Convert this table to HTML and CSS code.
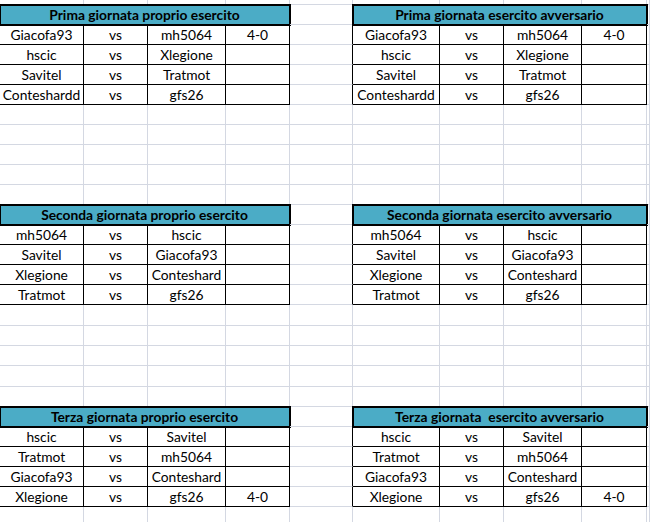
FILE: index.html
```html
<!DOCTYPE html>
<html lang="it">
<head>
<meta charset="utf-8">
<title>Giornate</title>
<link rel="stylesheet" href="styles.css">
</head>
<body>
<div class="sheet">
  <!-- row 0 -->
  <div></div><div></div><div></div><div></div><div></div><div></div><div></div><div></div><div></div><div></div>

  <!-- Prima giornata -->
  <div class="h">Prima giornata proprio esercito</div><div class="e"></div><div class="h">Prima giornata esercito avversario</div><div></div>
  <div class="t">Giacofa93</div><div class="t">vs</div><div class="t">mh5064</div><div class="t">4-0</div><div class="e"></div><div class="t">Giacofa93</div><div class="t">vs</div><div class="t">mh5064</div><div class="t">4-0</div><div></div>
  <div class="t">hscic</div><div class="t">vs</div><div class="t">Xlegione</div><div class="t"></div><div class="e"></div><div class="t">hscic</div><div class="t">vs</div><div class="t">Xlegione</div><div class="t"></div><div></div>
  <div class="t">Savitel</div><div class="t">vs</div><div class="t">Tratmot</div><div class="t"></div><div class="e"></div><div class="t">Savitel</div><div class="t">vs</div><div class="t">Tratmot</div><div class="t"></div><div></div>
  <div class="t">Conteshardd</div><div class="t">vs</div><div class="t">gfs26</div><div class="t"></div><div class="e"></div><div class="t">Conteshardd</div><div class="t">vs</div><div class="t">gfs26</div><div class="t"></div><div></div>

  <div></div><div></div><div></div><div></div><div></div><div></div><div></div><div></div><div></div><div></div>
  <div></div><div></div><div></div><div></div><div></div><div></div><div></div><div></div><div></div><div></div>
  <div></div><div></div><div></div><div></div><div></div><div></div><div></div><div></div><div></div><div></div>
  <div></div><div></div><div></div><div></div><div></div><div></div><div></div><div></div><div></div><div></div>
  <div></div><div></div><div></div><div></div><div></div><div></div><div></div><div></div><div></div><div></div>

  <!-- Seconda giornata -->
  <div class="h">Seconda giornata proprio esercito</div><div class="e"></div><div class="h">Seconda giornata esercito avversario</div><div></div>
  <div class="t">mh5064</div><div class="t">vs</div><div class="t">hscic</div><div class="t"></div><div class="e"></div><div class="t">mh5064</div><div class="t">vs</div><div class="t">hscic</div><div class="t"></div><div></div>
  <div class="t">Savitel</div><div class="t">vs</div><div class="t">Giacofa93</div><div class="t"></div><div class="e"></div><div class="t">Savitel</div><div class="t">vs</div><div class="t">Giacofa93</div><div class="t"></div><div></div>
  <div class="t">Xlegione</div><div class="t">vs</div><div class="t">Conteshard</div><div class="t"></div><div class="e"></div><div class="t">Xlegione</div><div class="t">vs</div><div class="t">Conteshard</div><div class="t"></div><div></div>
  <div class="t">Tratmot</div><div class="t">vs</div><div class="t">gfs26</div><div class="t"></div><div class="e"></div><div class="t">Tratmot</div><div class="t">vs</div><div class="t">gfs26</div><div class="t"></div><div></div>

  <div></div><div></div><div></div><div></div><div></div><div></div><div></div><div></div><div></div><div></div>
  <div></div><div></div><div></div><div></div><div></div><div></div><div></div><div></div><div></div><div></div>
  <div></div><div></div><div></div><div></div><div></div><div></div><div></div><div></div><div></div><div></div>
  <div></div><div></div><div></div><div></div><div></div><div></div><div></div><div></div><div></div><div></div>
  <div></div><div></div><div></div><div></div><div></div><div></div><div></div><div></div><div></div><div></div>

  <!-- Terza giornata -->
  <div class="h">Terza giornata proprio esercito</div><div class="e"></div><div class="h">Terza giornata  esercito avversario</div><div></div>
  <div class="t">hscic</div><div class="t">vs</div><div class="t">Savitel</div><div class="t"></div><div class="e"></div><div class="t">hscic</div><div class="t">vs</div><div class="t">Savitel</div><div class="t"></div><div></div>
  <div class="t">Tratmot</div><div class="t">vs</div><div class="t">mh5064</div><div class="t"></div><div class="e"></div><div class="t">Tratmot</div><div class="t">vs</div><div class="t">mh5064</div><div class="t"></div><div></div>
  <div class="t">Giacofa93</div><div class="t">vs</div><div class="t">Conteshard</div><div class="t"></div><div class="e"></div><div class="t">Giacofa93</div><div class="t">vs</div><div class="t">Conteshard</div><div class="t"></div><div></div>
  <div class="t">Xlegione</div><div class="t">vs</div><div class="t">gfs26</div><div class="t">4-0</div><div class="e"></div><div class="t">Xlegione</div><div class="t">vs</div><div class="t">gfs26</div><div class="t">4-0</div><div></div>

  <div></div><div></div><div></div><div></div><div></div><div></div><div></div><div></div><div></div><div></div>
</div>
</body>
</html>
```

FILE: styles.css
```css
html, body {
  margin: 0;
  padding: 0;
  background: #ffffff;
  overflow: hidden;
}

.sheet {
  display: grid;
  grid-template-columns: 84px 64px 78px 64px 63px 87px 64px 78px 65px 1fr;
  grid-template-rows: 5px repeat(15, 20px) 21px 20px 20px 21px 20px repeat(6, 20px);
  width: 650px;
  font-family: Lato, "Open Sans", sans-serif;
  font-size: 13.8px;
  color: #000000;
}

.sheet > div {
  box-sizing: border-box;
  border-right: 1px solid #d4d8e2;
  border-bottom: 1px solid #d4d8e2;
  line-height: 18px;
  padding-top: 1px;
  text-align: center;
  white-space: pre;
  overflow: hidden;
}

.sheet > .t {
  border-right-color: #000000;
  border-bottom-color: #000000;
}

.sheet > .e {
  border-right-color: #000000;
}

.sheet > .h {
  grid-column: span 4;
  background: #4bacc6;
  font-weight: bold;
  border-right-color: #000000;
  border-bottom-color: #000000;
  outline: 2px solid #000000;
  outline-offset: -1px;
  overflow: visible;
}
```
